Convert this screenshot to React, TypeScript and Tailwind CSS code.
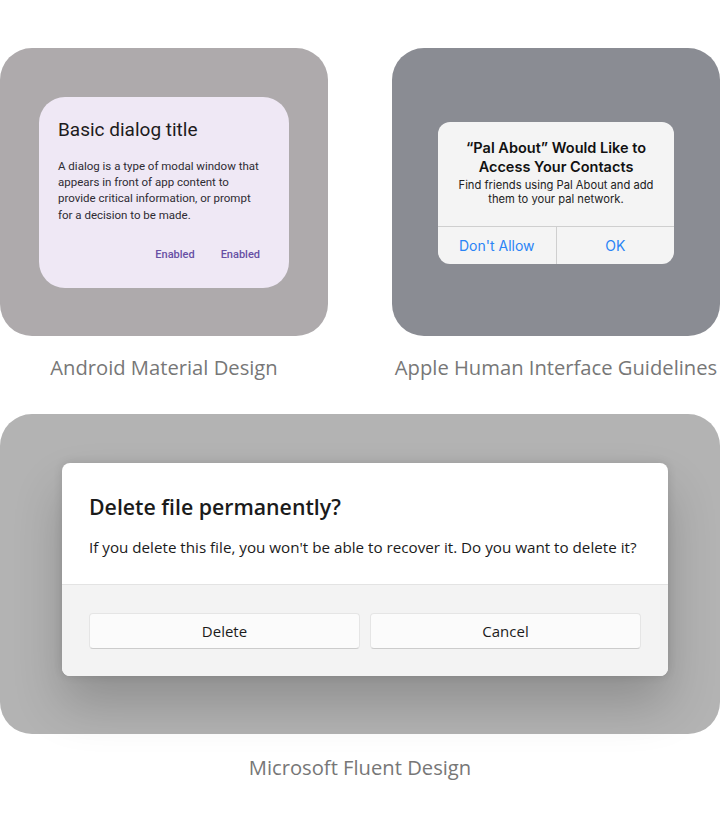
import React from 'react';

const AndroidDialog: React.FC = () => (
  <div className="flex h-[288px] w-[328px] items-center justify-center rounded-[32px] bg-[#aeaaac]">
    <div className="flex h-[191px] w-[250px] flex-col rounded-[26px] bg-[#efe8f5] px-[19px] pt-[21px] font-['Roboto',sans-serif]">
      <h2 className="text-[19px] leading-[24px] text-[#1d1b20]">Basic dialog title</h2>
      <p className="mt-[16px] w-[206px] text-[11.5px] leading-[16.4px] text-[#2e2b33]">
        A dialog is a type of modal window that appears in front of app content to provide critical information, or prompt
        for a decision to be made.
      </p>
      <div className="mt-[24px] flex justify-end gap-[26px] pr-[10px] text-[11px] font-medium text-[#6750a4]">
        <span>Enabled</span>
        <span>Enabled</span>
      </div>
    </div>
  </div>
);

const AppleDialog: React.FC = () => (
  <div className="flex h-[288px] w-[328px] items-center justify-center rounded-[32px] bg-[#8a8c93] pt-[2px]">
    <div className="flex h-[142px] w-[236px] flex-col overflow-hidden rounded-[12px] bg-[#f4f4f4] font-['Inter',sans-serif]">
      <div className="flex flex-1 flex-col items-center px-[12px] pt-[16px] text-center">
        <h2 className="text-[14.5px] font-semibold leading-[19px] text-[#111]">
          “Pal About” Would Like to
          <br />
          Access Your Contacts
        </h2>
        <p className="mt-[2px] text-[11.2px] leading-[14px] text-[#222]">
          Find friends using Pal About and add
          <br />
          them to your pal network.
        </p>
      </div>
      <div className="flex h-[38px] border-t border-[#cfcfcf] text-[14px] text-[#2a84f6]">
        <div className="flex flex-1 items-center justify-center border-r border-[#cfcfcf]">Don't Allow</div>
        <div className="flex flex-1 items-center justify-center">OK</div>
      </div>
    </div>
  </div>
);

const FluentDialog: React.FC = () => (
  <div className="flex h-[320px] w-[720px] items-start rounded-[32px] bg-[#b3b3b3] pl-[62px] pt-[49px]">
    <div className="flex h-[213px] w-[606px] flex-col overflow-hidden rounded-[8px] bg-white font-['Open_Sans',sans-serif] shadow-[0_28px_50px_rgba(0,0,0,0.2),0_0_10px_rgba(0,0,0,0.12)]">
      <div className="h-[122px] border-b border-[#e3e3e3] px-[27px] pt-[30px]">
        <h2 className="text-[21.3px] font-semibold leading-[28px] text-[#1b1b1b]">Delete file permanently?</h2>
        <p className="mt-[16px] whitespace-nowrap text-[15.2px] leading-[20px] text-[#1b1b1b]">
          If you delete this file, you won't be able to recover it. Do you want to delete it?
        </p>
      </div>
      <div className="flex flex-1 gap-[10px] bg-[#f3f3f3] px-[27px] pt-[28px]">
        <button className="flex h-[36px] flex-1 items-center justify-center rounded-[4px] border border-[#e5e5e5] border-b-[#cccccc] bg-[#fbfbfb] text-[15px] text-[#1b1b1b]">
          Delete
        </button>
        <button className="flex h-[36px] flex-1 items-center justify-center rounded-[4px] border border-[#e5e5e5] border-b-[#cccccc] bg-[#fbfbfb] text-[15px] text-[#1b1b1b]">
          Cancel
        </button>
      </div>
    </div>
  </div>
);

const Label: React.FC<{ children: React.ReactNode }> = ({ children }) => (
  <div className="text-center font-['Open_Sans',sans-serif] text-[20.2px] leading-[28px] text-[#777777]">{children}</div>
);

export default function App() {
  return (
    <div className="flex w-[720px] flex-col bg-white pt-[48px]">
      <div className="flex gap-[64px]">
        <div className="flex flex-col gap-[17px]">
          <AndroidDialog />
          <Label>Android Material Design</Label>
        </div>
        <div className="flex flex-col gap-[17px]">
          <AppleDialog />
          <Label>Apple Human Interface Guidelines</Label>
        </div>
      </div>
      <div className="mt-[33px] flex flex-col gap-[19px]">
        <FluentDialog />
        <Label>Microsoft Fluent Design</Label>
      </div>
    </div>
  );
}
